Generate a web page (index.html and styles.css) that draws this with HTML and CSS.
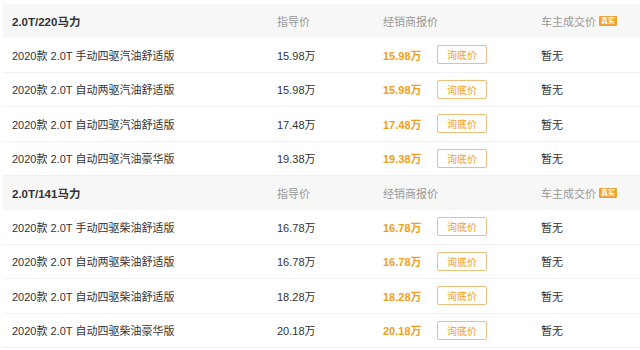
FILE: index.html
```html
<!DOCTYPE html>
<html lang="zh">
<head>
<meta charset="utf-8">
<link rel="stylesheet" href="styles.css">
</head>
<body>
<div class="table">
  <div class="row head">
    <div class="c name">2.0T/220马力</div>
    <div class="c guide">指导价</div>
    <div class="c dealer">经销商报价</div>
    <div class="c owner">车主成交价<span class="badge">真实</span></div>
  </div>
  <div class="row">
    <div class="c name">2020款 2.0T 手动四驱汽油舒适版</div>
    <div class="c guide">15.98万</div>
    <div class="c dealer"><span class="price">15.98万</span><span class="btn">询底价</span></div>
    <div class="c owner">暂无</div>
  </div>
  <div class="row">
    <div class="c name">2020款 2.0T 自动两驱汽油舒适版</div>
    <div class="c guide">15.98万</div>
    <div class="c dealer"><span class="price">15.98万</span><span class="btn">询底价</span></div>
    <div class="c owner">暂无</div>
  </div>
  <div class="row">
    <div class="c name">2020款 2.0T 自动四驱汽油舒适版</div>
    <div class="c guide">17.48万</div>
    <div class="c dealer"><span class="price">17.48万</span><span class="btn">询底价</span></div>
    <div class="c owner">暂无</div>
  </div>
  <div class="row">
    <div class="c name">2020款 2.0T 自动四驱汽油豪华版</div>
    <div class="c guide">19.38万</div>
    <div class="c dealer"><span class="price">19.38万</span><span class="btn">询底价</span></div>
    <div class="c owner">暂无</div>
  </div>
  <div class="row head">
    <div class="c name">2.0T/141马力</div>
    <div class="c guide">指导价</div>
    <div class="c dealer">经销商报价</div>
    <div class="c owner">车主成交价<span class="badge">真实</span></div>
  </div>
  <div class="row">
    <div class="c name">2020款 2.0T 手动四驱柴油舒适版</div>
    <div class="c guide">16.78万</div>
    <div class="c dealer"><span class="price">16.78万</span><span class="btn">询底价</span></div>
    <div class="c owner">暂无</div>
  </div>
  <div class="row">
    <div class="c name">2020款 2.0T 自动两驱柴油舒适版</div>
    <div class="c guide">16.78万</div>
    <div class="c dealer"><span class="price">16.78万</span><span class="btn">询底价</span></div>
    <div class="c owner">暂无</div>
  </div>
  <div class="row">
    <div class="c name">2020款 2.0T 自动四驱柴油舒适版</div>
    <div class="c guide">18.28万</div>
    <div class="c dealer"><span class="price">18.28万</span><span class="btn">询底价</span></div>
    <div class="c owner">暂无</div>
  </div>
  <div class="row">
    <div class="c name">2020款 2.0T 自动四驱柴油豪华版</div>
    <div class="c guide">20.18万</div>
    <div class="c dealer"><span class="price">20.18万</span><span class="btn">询底价</span></div>
    <div class="c owner">暂无</div>
  </div>
</div>
</body>
</html>
```

FILE: styles.css
```css
html, body {
  margin: 0;
  padding: 0;
  background: #fff;
}
body {
  padding: 4px 0 0 3px;
  font-family: "Liberation Sans", "Noto Sans CJK SC", sans-serif;
  font-size: 11px;
  color: #333;
}
.table {
  display: flex;
  flex-direction: column;
}
.row {
  display: flex;
  align-items: center;
  height: 34.5px;
  border-bottom: 1px solid #f0f0f0;
  box-sizing: border-box;
}
.row.head {
  height: 34px;
  background: #f7f7f7;
  border-bottom: none;
}
.c {
  display: flex;
  align-items: center;
  white-space: nowrap;
}
.name {
  width: 265px;
  padding-left: 9px;
}
.head .name {
  font-weight: bold;
  font-size: 11.5px;
  color: #333;
}
.guide {
  width: 106px;
}
.dealer {
  width: 158px;
}
.head .guide, .head .dealer, .head .owner {
  color: #999;
}
.price {
  width: 54px;
  color: #f0a020;
  font-weight: bold;
}
.btn {
  width: 48px;
  height: 17px;
  border: 1px solid #ecc07a;
  border-radius: 2px;
  color: #f0a020;
  font-size: 10px;
  display: flex;
  align-items: center;
  justify-content: center;
}
.badge {
  margin-left: 3px;
  background: #f0a030;
  color: #fff;
  font-size: 7px;
  line-height: 10px;
  height: 10px;
  padding: 0 2px;
  border-radius: 1px;
  font-weight: bold;
}
```
